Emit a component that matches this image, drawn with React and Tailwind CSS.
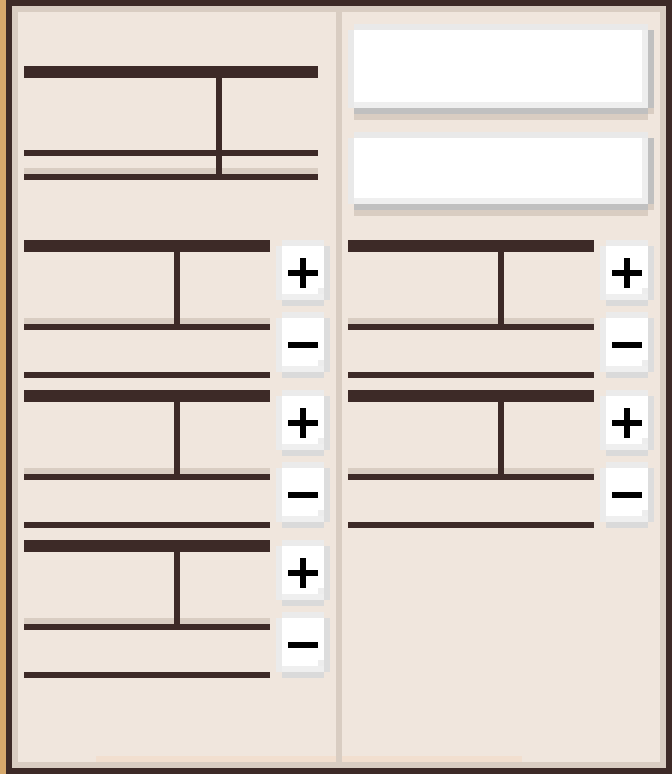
import React from "react";

const DARK = "bg-[#3d2a27]";

const PlusIcon = () => (
  <svg width="30" height="30" viewBox="0 0 30 30" shapeRendering="crispEdges">
    <rect x="0" y="12" width="30" height="6" fill="#000" />
    <rect x="12" y="0" width="6" height="30" fill="#000" />
  </svg>
);

const MinusIcon = () => (
  <svg width="30" height="6" viewBox="0 0 30 6" shapeRendering="crispEdges">
    <rect x="0" y="0" width="30" height="6" fill="#000" />
  </svg>
);

// pixel-style square button: light frame, notch and soft drop shadow
const PixelButton = ({ kind }) => (
  <button className="flex flex-col w-[54px] h-[66px] p-0 cursor-pointer">
    <div className="ml-[6px] w-[42px] h-[6px] bg-[#ebebeb]" />
    <div className="flex">
      <div className="w-[6px] h-[54px] bg-[#ebebeb]" />
      <div className="flex flex-col w-[42px]">
        <div className="flex flex-col w-[42px] h-[48px] bg-white">
          <div
            className={
              kind === "plus"
                ? "h-[42px] pt-[12px] pl-[6px]"
                : "h-[42px] pt-[24px] pl-[6px]"
            }
          >
            {kind === "plus" ? <PlusIcon /> : <MinusIcon />}
          </div>
          <div className="flex justify-end h-[6px]">
            <div className="w-[6px] h-[6px] bg-[#ededed]" />
          </div>
        </div>
        <div className="h-[6px] bg-[#efefef]" />
      </div>
      <div className="w-[6px] h-[54px] bg-[#dddddd]" />
    </div>
    <div className="ml-[6px] w-[42px] h-[6px] bg-[#dadada]" />
  </button>
);

const InputBox = ({ height }) => (
  <div className="flex flex-col w-[306px]">
    <div className="ml-[6px] w-[294px] h-[6px] bg-[#e9e9e9]" />
    <div className="flex">
      <div className="w-[6px] bg-[#e9e9e9]" />
      <div className="flex flex-col w-[288px]">
        <div className={`bg-white ${height}`} />
        <div className="h-[6px] bg-[#efefef]" />
      </div>
      <div className="w-[6px] bg-[#eeeeee]" />
      <div className="w-[6px] bg-[#c0c0c0]" />
    </div>
    <div className="flex ml-[6px]">
      <div className="w-[294px] h-[6px] bg-[#c0c0c0]" />
      <div className="w-[6px] h-[6px] bg-[#d9cdc2]" />
    </div>
    <div className="ml-[6px] w-[294px] h-[6px] bg-[#d9cdc2]" />
  </div>
);

// small stand: thick top bar, post, middle rail and floor rail
const Stand = () => (
  <div className="flex flex-col w-[246px]">
    <div className={`h-[12px] ${DARK}`} />
    <div className="h-[66px] pl-[150px]">
      <div className={`w-[6px] h-full ${DARK}`} />
    </div>
    <div className="h-[6px] pl-[150px] bg-[#d9cdc2]">
      <div className={`w-[6px] h-full ${DARK}`} />
    </div>
    <div className={`h-[6px] ${DARK}`} />
    <div className="h-[42px]" />
    <div className={`h-[6px] ${DARK}`} />
  </div>
);

const Row = () => (
  <div className="flex gap-[6px]">
    <Stand />
    <div className="flex flex-col gap-[6px]">
      <PixelButton kind="plus" />
      <PixelButton kind="minus" />
    </div>
  </div>
);

const TopTable = () => (
  <div className="flex flex-col w-[294px]">
    <div className={`h-[12px] ${DARK}`} />
    <div className="h-[72px] pl-[192px]">
      <div className={`w-[6px] h-full ${DARK}`} />
    </div>
    <div className={`h-[6px] ${DARK}`} />
    <div className="h-[12px] pl-[192px]">
      <div className={`w-[6px] h-full ${DARK}`} />
    </div>
    <div className="h-[6px] pl-[192px] bg-[#d9cdc2]">
      <div className={`w-[6px] h-full ${DARK}`} />
    </div>
    <div className={`h-[6px] ${DARK}`} />
  </div>
);

export default function App() {
  return (
    <div
      className="w-[672px] h-[774px] pl-[6px] bg-[#d7a96c]"
      style={{ fontFamily: "'Liberation Sans', sans-serif" }}
    >
      <div className={`w-[666px] h-[774px] p-[6px] ${DARK}`}>
        <div className="flex gap-[6px] w-[654px] h-[762px] p-[6px] bg-[#d9cdc2]">
          <div className="flex flex-col w-[318px] h-[750px] pt-[54px] bg-[#f0e6dd]">
            <div className="pl-[6px]">
              <TopTable />
              <div className="flex flex-col gap-[12px] mt-[60px]">
                <Row />
                <Row />
                <Row />
              </div>
            </div>
            <div className="mt-auto ml-[78px] h-[6px] bg-[#f2dfcf]" />
          </div>
          <div className="flex flex-col w-[318px] h-[750px] pt-[12px] bg-[#f0e6dd]">
            <div className="px-[6px]">
              <div className="flex flex-col gap-[12px]">
                <InputBox height="h-[72px]" />
                <InputBox height="h-[60px]" />
              </div>
              <div className="flex flex-col gap-[12px] mt-[24px]">
                <Row />
                <Row />
              </div>
            </div>
            <div className="mt-auto w-[180px] h-[6px] bg-[#f2dfcf]" />
          </div>
        </div>
      </div>
    </div>
  );
}
